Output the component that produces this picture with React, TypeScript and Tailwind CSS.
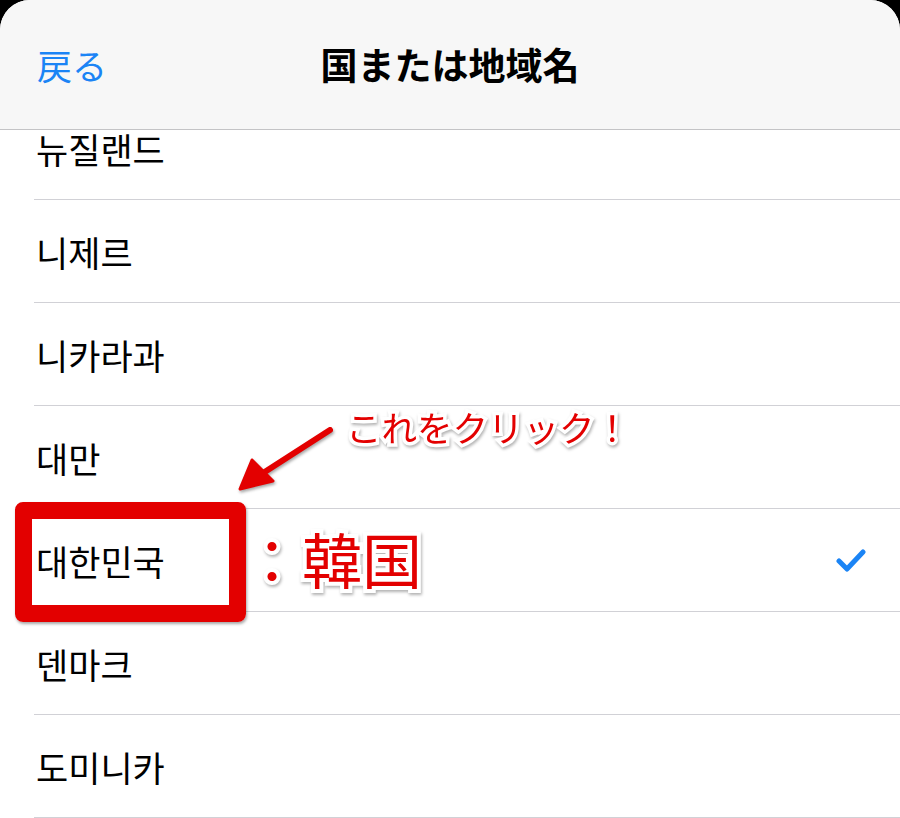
import React from "react";

const rows = ["뉴질랜드", "니제르", "니카라과", "대만", "대한민국", "덴마크", "도미니카"];

export default function App() {
  return (
    <div className="relative w-[900px] h-[818px] overflow-hidden bg-black">
      <div className="relative w-full h-full bg-white rounded-t-[30px] overflow-hidden">
        <header
          className="relative z-10 h-[130px] bg-[#f7f7f7] border-b border-[#c4c4c6] grid grid-cols-[1fr_auto_1fr] items-center pl-[37px]"
          style={{ fontFamily: '"Noto Sans CJK JP", "Noto Sans", sans-serif' }}
        >
          <span className="text-[35px] leading-none text-[#1b84f5] justify-self-start">戻る</span>
          <h1 className="text-[37px] font-bold text-black leading-none -ml-[37px]">国または地域名</h1>
          <span />
        </header>

        <div
          className="mt-[-33px] flex flex-col"
          style={{ fontFamily: '"Noto Sans CJK KR", "Noto Sans", sans-serif' }}
        >
          {rows.map((r) => (
            <div key={r} className="h-[103px] pl-[34px]">
              <div className="h-full border-b border-[#d1d1d6] flex items-center justify-between pr-[34px]">
                <span className="ml-[2px] text-[35px] leading-none text-black">{r}</span>
                {r === "대한민국" && (
                  <svg width="30" height="26" viewBox="0 0 30 26" className="mt-[2px]">
                    <path
                      d="M3 13 L11 21 L27 4"
                      fill="none"
                      stroke="#1b84f5"
                      strokeWidth="5"
                      strokeLinecap="round"
                      strokeLinejoin="round"
                    />
                  </svg>
                )}
              </div>
            </div>
          ))}
        </div>

        {/* annotations */}
        <div className="absolute left-[15px] top-[502px] w-[231px] h-[120px] border-[17px] border-[#e30000] rounded-[8px] shadow-[1px_2px_3px_rgba(0,0,0,0.35)]" />

        <svg className="absolute left-[230px] top-[425px] overflow-visible" width="110" height="75" viewBox="0 0 110 75">
          <g style={{ filter: "drop-shadow(1px 2px 1.5px rgba(0,0,0,0.35))" }}>
            <path d="M100 5 L30 50" stroke="#e30000" strokeWidth="6" strokeLinecap="round" fill="none" />
            <path d="M10 64 L22 35 L43 56 Z" fill="#e30000" stroke="#e30000" strokeWidth="3" strokeLinejoin="round" />
          </g>
        </svg>

        <div
          className="absolute left-[346px] top-[409px] text-[35.5px] leading-none text-[#e30000] [-webkit-text-stroke:7px_white] [paint-order:stroke_fill] drop-shadow-[1px_2px_1.5px_rgba(0,0,0,0.3)]"
          style={{ fontFamily: '"Noto Sans CJK JP", sans-serif' }}
        >
          これをクリック！
        </div>

        <div
          className="absolute left-[242px] top-[528px] text-[60px] leading-none font-normal text-[#e30000] [-webkit-text-stroke:8px_white] [paint-order:stroke_fill] drop-shadow-[1px_2px_1.5px_rgba(0,0,0,0.3)]"
          style={{ fontFamily: '"Noto Sans CJK JP", sans-serif' }}
        >
          ：韓国
        </div>
      </div>
    </div>
  );
}
